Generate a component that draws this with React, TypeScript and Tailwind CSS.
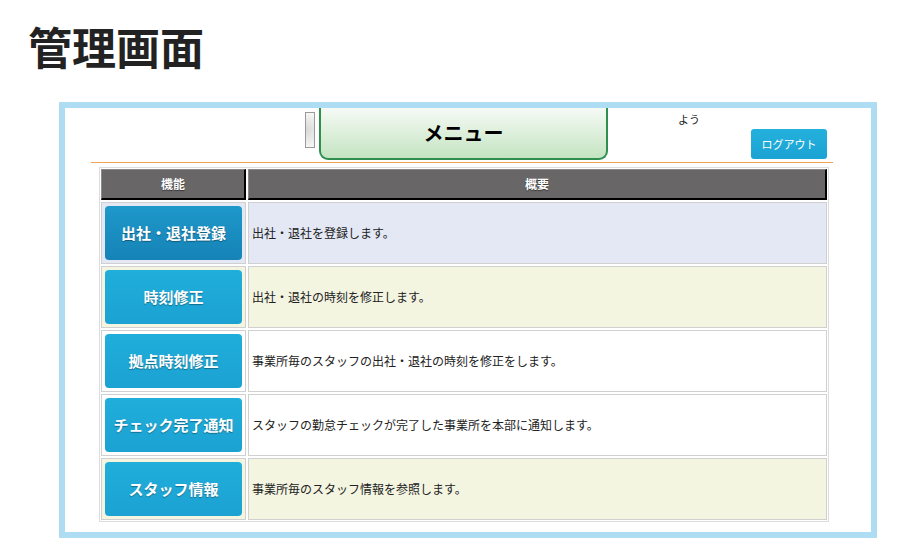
const rows = [
  { label: "出社・退社登録", desc: "出社・退社を登録します。", bg: "bg-[#e3e8f4]", active: true },
  { label: "時刻修正", desc: "出社・退社の時刻を修正します。", bg: "bg-[#f3f5e1]" },
  { label: "拠点時刻修正", desc: "事業所毎のスタッフの出社・退社の時刻を修正をします。", bg: "bg-white" },
  { label: "チェック完了通知", desc: "スタッフの勤怠チェックが完了した事業所を本部に通知します。", bg: "bg-white" },
  { label: "スタッフ情報", desc: "事業所毎のスタッフ情報を参照します。", bg: "bg-[#f3f5e1]" },
];

function MenuButton({ label, active }: { label: string; active?: boolean }) {
  return (
    <div
      className={
        active
          ? "h-[54px] w-full rounded-[4px] bg-gradient-to-b from-[#1e98ca] to-[#1683b7] flex items-center justify-center text-white text-[15px] font-bold [text-shadow:0_1px_1px_rgba(0,0,0,0.35)]"
          : "h-[54px] w-full rounded-[4px] bg-gradient-to-b from-[#20aedb] to-[#1ba2d2] flex items-center justify-center text-white text-[15px] font-bold [text-shadow:0_1px_1px_rgba(0,0,0,0.35)]"
      }
    >
      {label}
    </div>
  );
}

export default function App() {
  return (
    <div className="min-h-screen bg-white text-[#222] font-['Noto_Sans_CJK_JP','Noto_Sans',sans-serif]">
      {/* Page title */}
      <h1 className="pl-[28px] pt-[24px] text-[44px] leading-none font-bold text-[#222]">管理画面</h1>

      {/* Frame */}
      <div className="ml-[59px] mt-[34px] w-[818px] h-[436px] border-[6px] border-[#addcf3] bg-white">
        <div className="ml-[26px] w-[742px]">
          {/* Header */}
          <div className="flex h-[55px] border-b border-[#f0a258]">
            <div className="ml-[214px] mt-[4px] w-[10px] h-[36px] border border-[#9a9a9a] bg-[radial-gradient(circle_at_left,#d8d8d8,#f8f8f8)]" />
            <div className="ml-[4px] w-[289px] h-[52px] border-2 border-t-0 border-[#2f8f4f] rounded-b-[9px] bg-gradient-to-b from-[#f6faf5] to-[#c4e4c2] flex items-center justify-center text-[20px] font-bold text-black">
              メニュー
            </div>
            <div className="ml-[70px] mt-[3px] whitespace-nowrap text-[11px] leading-[16px]">
              よう
            </div>
            <div className="ml-[51px] self-end mb-[3px] w-[76px] h-[30px] rounded-[3px] bg-gradient-to-b from-[#24b0dc] to-[#1ba3d3] flex items-center justify-center text-white text-[11px]">
              ログアウト
            </div>
          </div>

          {/* Table */}
          <div className="ml-[8px] mt-[4px] w-[730px] border border-[#dcdcdc] p-[1px] grid grid-cols-[145px_1fr] gap-[2px]">
            <div className="h-[31px] bg-[#686666] border-t border-l border-[#8a8888] border-r-2 border-b-2 border-r-black border-b-black flex items-center justify-center text-white text-[12px] font-bold [text-shadow:0_1px_1px_rgba(0,0,0,0.5)]">
              機能
            </div>
            <div className="h-[31px] bg-[#686666] border-t border-l border-[#8a8888] border-r-2 border-b-2 border-r-black border-b-black flex items-center justify-center text-white text-[12px] font-bold [text-shadow:0_1px_1px_rgba(0,0,0,0.5)]">
              概要
            </div>
            {rows.map((r) => (
              <div key={r.label} className="contents">
                <div className={`h-[62px] border border-[#d0d0d0] px-[3px] flex items-center ${r.bg}`}>
                  <MenuButton label={r.label} active={r.active} />
                </div>
                <div className={`h-[62px] border border-[#d0d0d0] pl-[3px] flex items-center text-[12px] ${r.bg}`}>
                  {r.desc}
                </div>
              </div>
            ))}
          </div>
        </div>
      </div>
    </div>
  );
}
